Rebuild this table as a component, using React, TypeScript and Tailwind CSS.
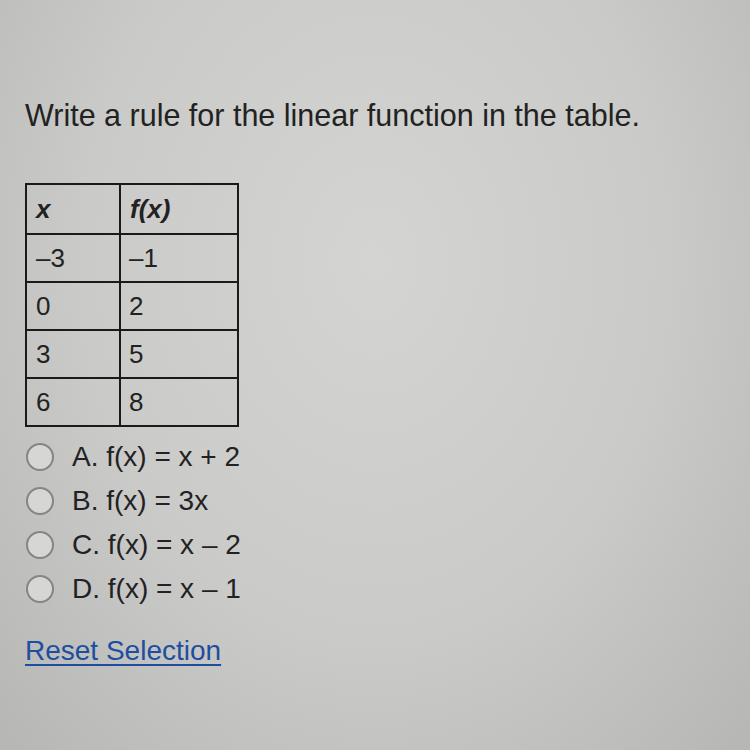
import React from "react"

const rows = [
  ["–3", "–1"],
  ["0", "2"],
  ["3", "5"],
  ["6", "8"],
]

const options = [
  "A. f(x) = x + 2",
  "B. f(x) = 3x",
  "C. f(x) = x – 2",
  "D. f(x) = x – 1",
]

export default function App() {
  return (
    <div className="w-[750px] h-[750px] bg-[radial-gradient(ellipse_at_50%_35%,#d4d4d2_0%,#cacac8_55%,#b6b6b4_100%)] text-[#222222] font-['Liberation_Sans',Arial,sans-serif] pt-[97px] pl-[25px]">
      <h1 className="text-[30.5px] leading-[36px]">Write a rule for the linear function in the table.</h1>

      {/* Table */}
      <table className="mt-[50px] border-collapse border-2 border-[#1a1a1a] text-[26px]">
        <thead>
          <tr className="h-[50px]">
            <th className="w-[94px] border-2 border-[#1a1a1a] pl-[9px] text-left font-bold italic">x</th>
            <th className="w-[118px] border-2 border-[#1a1a1a] pl-[9px] text-left font-bold italic">f(x)</th>
          </tr>
        </thead>
        <tbody>
          {rows.map((r, i) => (
            <tr key={i} className="h-[48px]">
              <td className="border-2 border-[#1a1a1a] pl-[9px]">{r[0]}</td>
              <td className="border-2 border-[#1a1a1a] pl-[8px]">{r[1]}</td>
            </tr>
          ))}
        </tbody>
      </table>

      {/* Options */}
      <div className="flex flex-col mt-[8px]">
        {options.map((o) => (
          <label key={o} className="flex items-center h-[44px] text-[28px]">
            <span className="w-[28px] h-[28px] rounded-full border-2 border-[#858585] bg-[#d6d6d4] ml-[1px] mr-[18px]" />
            {o}
          </label>
        ))}
      </div>

      <a className="inline-block mt-[24px] text-[28px] leading-[32px] text-[#1d4ea0] underline underline-offset-[4px]">Reset Selection</a>
    </div>
  )
}
